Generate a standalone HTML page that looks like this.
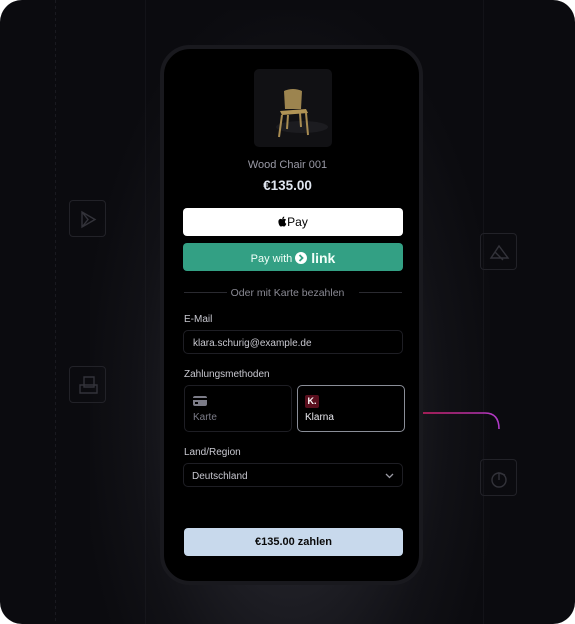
<!DOCTYPE html>
<html><head><meta charset="utf-8"><style>
*{margin:0;padding:0;box-sizing:border-box}
html,body{width:575px;height:624px;background:#fff;overflow:hidden;font-family:"Liberation Sans",sans-serif}
.panel{position:absolute;left:0;top:0;width:575px;height:624px;border-radius:22px;background:#0b0b0f;overflow:hidden}
.vl{position:absolute;top:0;bottom:0;width:1px;background:#131318}
.glow{position:absolute;left:90px;top:10px;width:400px;height:614px;border-radius:100px 100px 0 0;background:radial-gradient(ellipse at 50% 65%,rgba(80,80,92,.55),rgba(35,35,42,.25) 55%,rgba(0,0,0,0) 75%)}
.phone{position:absolute;left:160px;top:45px;width:263px;height:540px;border-radius:30px;background:#000;border:4px solid #19191e}
.abs{position:absolute}
.t{position:absolute;left:0;width:100%;text-align:center}
.box{position:absolute;width:37px;height:37px;border:1px solid #222228;border-radius:4px}
.lbl{position:absolute;left:184px;font-size:10px;color:#c8c8d0}
.inp{position:absolute;left:183px;width:220px;height:24px;border:1px solid #1e1e24;border-radius:5px;font-size:10px;color:#c8c8d0;padding:7px 0 0 9px}
</style></head><body>
<div class="panel">
<div class="vl" style="left:55px;background:repeating-linear-gradient(#1a1a20 0 3px,transparent 3px 6px)"></div>
<div class="vl" style="left:145px"></div>
<div class="vl" style="left:483px"></div>
<div class="glow"></div>
<div class="box" style="left:69px;top:200px"><svg width="37" height="37"><path d="M12 11 L25 18.5 L12 26 Z M12 11 L18 18.5 L12 26" fill="none" stroke="#33333a" stroke-width="1.4"/></svg></div>
<div class="box" style="left:69px;top:366px"><svg width="37" height="37"><path d="M14 10h10v10H14z M10 18h17v8H10z" fill="none" stroke="#33333a" stroke-width="1.4"/></svg></div>
<div class="box" style="left:480px;top:233px"><svg width="37" height="37"><path d="M10 24 L18 12 L27 24 Z M14 18 L22 26" fill="none" stroke="#33333a" stroke-width="1.4"/></svg></div>
<div class="box" style="left:480px;top:459px"><svg width="37" height="37"><circle cx="18" cy="20" r="7" fill="none" stroke="#33333a" stroke-width="1.4"/><path d="M18 20 L18 13 L24 15" fill="none" stroke="#33333a" stroke-width="1.4"/></svg></div>
<svg class="abs" style="left:423px;top:405px" width="80" height="30"><defs><linearGradient id="g"><stop offset="0" stop-color="#d0206a"/><stop offset="1" stop-color="#b03ac8"/></linearGradient></defs><path d="M0 8 H62 Q76 8 76 24" fill="none" stroke="url(#g)" stroke-width="1.6"/></svg>
<div class="phone"></div>
<div class="abs" style="left:254px;top:69px;width:78px;height:78px;border-radius:5px;background:#111114;overflow:hidden">
<svg width="78" height="78"><ellipse cx="48" cy="58" rx="26" ry="6" fill="#1c1c20"/><path d="M30 22 Q39 18 48 22 L47 40 L31 40 Z" fill="#9c844f"/><path d="M26 42 L52 40 L54 44 L28 46 Z" fill="#b09355"/><path d="M28 46 L25 68 M52 44 L54 66 M34 46 L33 60 M46 44 L47 58" stroke="#a88c52" stroke-width="2"/></svg></div>
<div class="t" style="top:159px;font-size:11px;color:#9a9aa6">Wood Chair 001</div>
<div class="t" style="top:178px;font-size:13.5px;font-weight:bold;color:#dfe5ef">€135.00</div>
<div class="abs" style="left:183px;top:208px;width:220px;height:28px;background:#fff;border-radius:4px;text-align:center;font-size:12px;color:#000;padding-top:7px"><svg width="9" height="11" viewBox="0 0 9 11" style="vertical-align:-1px"><path d="M6.2 0.5c-.6.1-1.3.5-1.6 1.1-.3.5-.4 1-.3 1.5.6 0 1.2-.4 1.6-.9.3-.5.4-1.1.3-1.7zM4.5 3.3c-.7 0-1.1-.4-1.8-.4C1.7 2.9.4 3.7.4 5.7c0 2.1 1.4 4.8 2.4 4.8.6 0 .9-.4 1.7-.4s1 .4 1.7.4c1 0 1.9-2 2.1-2.7-1-.4-1.5-1.4-1.3-2.4.1-.7.6-1.2 1.1-1.5-.5-.7-1.3-1-2-1-.7 0-1.2.4-1.600.4z" fill="#000"/></svg>Pay</div>
<div class="abs" style="left:183px;top:243px;width:220px;height:28px;background:#33a084;border-radius:4px;text-align:center;font-size:11px;color:#f2fff9;padding-top:7px">Pay with <svg width="12" height="12" style="vertical-align:-2px"><circle cx="6" cy="6" r="6" fill="#fff"/><path d="M4.5 3 L7.5 6 L4.5 9" fill="none" stroke="#33a084" stroke-width="1.8"/></svg><span style="font-size:14px;font-weight:bold;vertical-align:-1px"> link</span></div>
<div class="abs" style="left:184px;top:292px;width:43px;height:1px;background:#2a2a30"></div>
<div class="abs" style="left:359px;top:292px;width:43px;height:1px;background:#2a2a30"></div>
<div class="t" style="top:287px;font-size:10.5px;color:#8a8a94">Oder mit Karte bezahlen</div>
<div class="lbl" style="top:314px">E-Mail</div>
<div class="inp" style="top:330px">klara.schurig@example.de</div>
<div class="lbl" style="top:369px">Zahlungsmethoden</div>
<div class="abs" style="left:184px;top:385px;width:108px;height:47px;border:1px solid #1e1e24;border-radius:5px">
<div class="abs" style="left:8px;top:10px;width:14px;height:10px;border-radius:2px;background:#7c7c88"><div style="position:absolute;left:0;top:2px;width:14px;height:2px;background:#000"></div><div style="position:absolute;left:2px;top:6px;width:3px;height:2px;background:#000"></div></div>
<div class="abs" style="left:8px;top:26px;font-size:10px;color:#7c7c88">Karte</div></div>
<div class="abs" style="left:297px;top:385px;width:108px;height:47px;border:1px solid #8a8e98;border-radius:5px">
<div class="abs" style="left:7px;top:9px;width:14px;height:13px;border-radius:2px;background:#5a0f1e;color:#fff;font-size:9px;font-weight:bold;text-align:center;padding-top:1px">K.</div>
<div class="abs" style="left:7px;top:26px;font-size:10px;color:#e8e8ee">Klarna</div></div>
<div class="lbl" style="top:447px">Land/Region</div>
<div class="inp" style="top:463px;padding-left:8px">Deutschland<svg class="abs" style="right:8px;top:9px" width="9" height="6"><path d="M1 1 L4.5 4.5 L8 1" fill="none" stroke="#9a9aa4" stroke-width="1.3"/></svg></div>
<div class="abs" style="left:184px;top:528px;width:219px;height:28px;background:#c8d9ec;border-radius:4px;text-align:center;font-size:11px;font-weight:bold;color:#0a0a0a;padding-top:8px">€135.00 zahlen</div>
</div>
</body></html>
